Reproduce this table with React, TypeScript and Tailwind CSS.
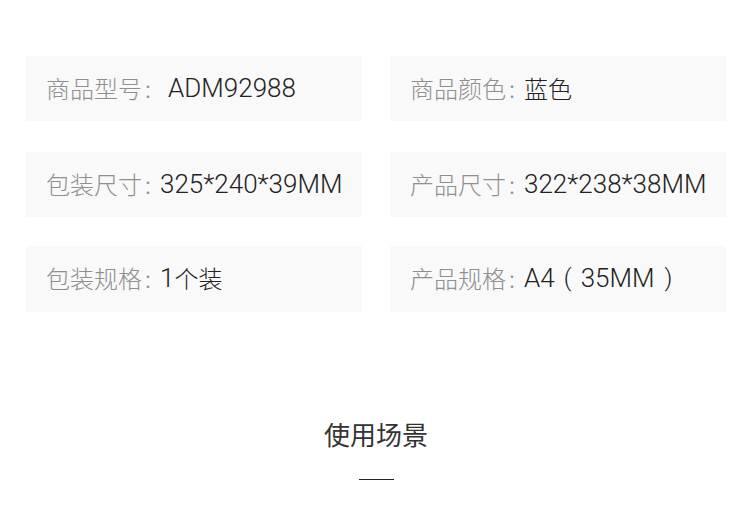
import React from "react";

const cjk = { fontFamily: '"Noto Sans CJK SC", sans-serif' };
const latin = { fontFamily: 'Roboto, "Noto Sans CJK SC", sans-serif' };

type Part = { t: string; c?: boolean; w?: string };

function Value({ parts }: { parts: Part[] }) {
  return (
    <span className="text-[#222222] flex items-center">
      {parts.map((p, i) =>
        p.w ? (
          <span key={i} className={"inline-block text-center text-[24px] font-light leading-none " + p.w} style={latin}>
            {p.t}
          </span>
        ) : p.c ? (
          <span key={i} className="text-[24px] font-light leading-none" style={cjk}>
            {p.t}
          </span>
        ) : (
          <span key={i} className="text-[26px] font-light leading-none" style={latin}>
            {p.t}
          </span>
        )
      )}
    </span>
  );
}

function Cell({ label, parts, extra = 0 }: { label: string; parts: Part[]; extra?: number }) {
  return (
    <div className="h-full bg-[#f9f9f9] flex items-center pl-[20px] pb-[2px]">
      <span className="text-[24px] font-light leading-none text-[#8f8f8f] flex items-center" style={cjk}>
        {label}
        <span className="inline-block w-[18px] pl-[3px]">:</span>
      </span>
      <span className={extra ? "ml-[8px]" : ""}>
        <Value parts={parts} />
      </span>
    </div>
  );
}

export default function App() {
  return (
    <div className="w-[752px] h-[512px] bg-white overflow-hidden relative">
      <div className="pt-[56px] pl-[26px] flex flex-col">
        <div className="grid grid-cols-[336px_336px] gap-x-[28px] h-[65px]">
          <Cell label="商品型号" parts={[{ t: "ADM92988" }]} extra={1} />
          <Cell label="商品颜色" parts={[{ t: "蓝色", c: true }]} />
        </div>
        <div className="grid grid-cols-[336px_336px] gap-x-[28px] h-[65px] mt-[31px]">
          <Cell label="包装尺寸" parts={[{ t: "325*240*39MM" }]} />
          <Cell label="产品尺寸" parts={[{ t: "322*238*38MM" }]} />
        </div>
        <div className="grid grid-cols-[336px_336px] gap-x-[28px] h-[66px] mt-[29px]">
          <Cell label="包装规格" parts={[{ t: "1" }, { t: "个装", c: true }]} />
          <Cell
            label="产品规格"
            parts={[
              { t: "A4" },
              { t: "(", w: "w-[26px]" },
              { t: "35MM" },
              { t: ")", w: "w-[28px]" },
            ]}
          />
        </div>
      </div>
      <div className="flex flex-col items-center mt-[109px]">
        <div className="text-[26px] leading-none text-[#333333]" style={cjk}>
          使用场景
        </div>
        <div className="w-[35px] h-[1px] bg-[#222222] mt-[32px]" />
      </div>
    </div>
  );
}
